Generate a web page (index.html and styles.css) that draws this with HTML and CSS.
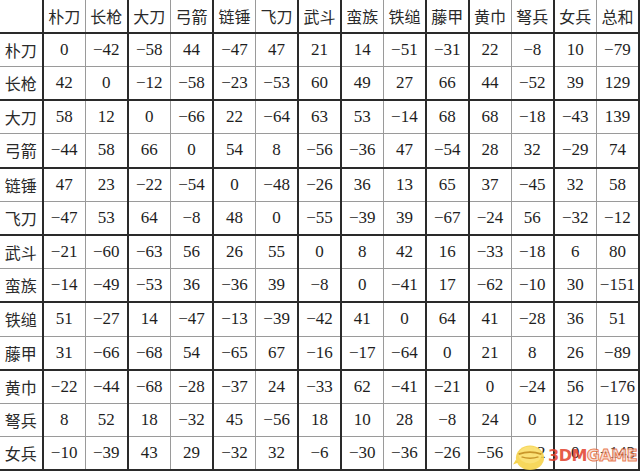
FILE: index.html
```html
<!DOCTYPE html>
<html lang="zh-CN">
<head>
<meta charset="utf-8">
<title>兵种克制表</title>
<link rel="stylesheet" href="styles.css">
</head>
<body>
<div class="wrap">
<table class="grid">
<tr><td></td><td>朴刀</td><td>长枪</td><td>大刀</td><td>弓箭</td><td>链锤</td><td>飞刀</td><td>武斗</td><td>蛮族</td><td>铁缒</td><td>藤甲</td><td>黄巾</td><td>弩兵</td><td>女兵</td><td>总和</td></tr>
<tr><td>朴刀</td><td>0</td><td>−42</td><td>−58</td><td>44</td><td>−47</td><td>47</td><td>21</td><td>14</td><td>−51</td><td>−31</td><td>22</td><td>−8</td><td>10</td><td>−79</td></tr>
<tr><td>长枪</td><td>42</td><td>0</td><td>−12</td><td>−58</td><td>−23</td><td>−53</td><td>60</td><td>49</td><td>27</td><td>66</td><td>44</td><td>−52</td><td>39</td><td>129</td></tr>
<tr><td>大刀</td><td>58</td><td>12</td><td>0</td><td>−66</td><td>22</td><td>−64</td><td>63</td><td>53</td><td>−14</td><td>68</td><td>68</td><td>−18</td><td>−43</td><td>139</td></tr>
<tr><td>弓箭</td><td>−44</td><td>58</td><td>66</td><td>0</td><td>54</td><td>8</td><td>−56</td><td>−36</td><td>47</td><td>−54</td><td>28</td><td>32</td><td>−29</td><td>74</td></tr>
<tr><td>链锤</td><td>47</td><td>23</td><td>−22</td><td>−54</td><td>0</td><td>−48</td><td>−26</td><td>36</td><td>13</td><td>65</td><td>37</td><td>−45</td><td>32</td><td>58</td></tr>
<tr><td>飞刀</td><td>−47</td><td>53</td><td>64</td><td>−8</td><td>48</td><td>0</td><td>−55</td><td>−39</td><td>39</td><td>−67</td><td>−24</td><td>56</td><td>−32</td><td>−12</td></tr>
<tr><td>武斗</td><td>−21</td><td>−60</td><td>−63</td><td>56</td><td>26</td><td>55</td><td>0</td><td>8</td><td>42</td><td>16</td><td>−33</td><td>−18</td><td>6</td><td>80</td></tr>
<tr><td>蛮族</td><td>−14</td><td>−49</td><td>−53</td><td>36</td><td>−36</td><td>39</td><td>−8</td><td>0</td><td>−41</td><td>17</td><td>−62</td><td>−10</td><td>30</td><td>−151</td></tr>
<tr><td>铁缒</td><td>51</td><td>−27</td><td>14</td><td>−47</td><td>−13</td><td>−39</td><td>−42</td><td>41</td><td>0</td><td>64</td><td>41</td><td>−28</td><td>36</td><td>51</td></tr>
<tr><td>藤甲</td><td>31</td><td>−66</td><td>−68</td><td>54</td><td>−65</td><td>67</td><td>−16</td><td>−17</td><td>−64</td><td>0</td><td>21</td><td>8</td><td>26</td><td>−89</td></tr>
<tr><td>黄巾</td><td>−22</td><td>−44</td><td>−68</td><td>−28</td><td>−37</td><td>24</td><td>−33</td><td>62</td><td>−41</td><td>−21</td><td>0</td><td>−24</td><td>56</td><td>−176</td></tr>
<tr><td>弩兵</td><td>8</td><td>52</td><td>18</td><td>−32</td><td>45</td><td>−56</td><td>18</td><td>10</td><td>28</td><td>−8</td><td>24</td><td>0</td><td>12</td><td>119</td></tr>
<tr><td>女兵</td><td>−10</td><td>−39</td><td>43</td><td>29</td><td>−32</td><td>32</td><td>−6</td><td>−30</td><td>−36</td><td>−26</td><td>−56</td><td>−12</td><td>0</td><td>−143</td></tr>
</table>
<div class="mark">
<svg class="chick" width="34" height="32" viewBox="0 0 36 34">
<ellipse cx="18" cy="20" rx="15" ry="13" fill="#f6d34a" opacity="0.9"/>
<ellipse cx="18" cy="17" rx="12" ry="9" fill="#fbe27a" opacity="0.9"/>
<path d="M6 16 Q18 12 30 16" stroke="#c9962a" stroke-width="2" fill="none"/>
<path d="M9 19 Q18 22 27 19" stroke="#c9962a" stroke-width="1.5" fill="none"/>
<path d="M3 22 L0 27 L6 25 Z" fill="#f6d34a"/>
</svg>
<span class="logo"><span class="red">3DM</span><span class="game">GAME</span></span>
</div>
</div>
</body>
</html>
```

FILE: styles.css
```css
html, body {
  margin: 0;
  padding: 0;
  background: #ffffff;
}
.wrap {
  position: relative;
  width: 640px;
  height: 471px;
  overflow: hidden;
}
.grid {
  width: 640px;
  height: 471px;
  border-collapse: collapse;
  table-layout: fixed;
  font-family: "Liberation Serif", "Noto Sans CJK SC", serif;
  font-size: 17px;
  line-height: 18px;
  color: #1e1e1e;
}
.grid td {
  border: 1px solid #9a9a9a;
  text-align: center;
  vertical-align: middle;
  padding: 0;
  white-space: nowrap;
}
.grid tr:first-child td,
.grid td:first-child {
  font-family: "Noto Sans CJK SC", sans-serif;
  font-size: 16px;
  color: #2a2a2a;
}
.grid tr:first-child td { border-top: none; }
.grid td:first-child { border-left: none; }

/* darker grid lines */
.grid td:nth-child(2),
.grid td:nth-child(4),
.grid td:nth-child(6),
.grid td:nth-child(8),
.grid td:nth-child(9),
.grid td:nth-child(11),
.grid td:nth-child(12),
.grid td:nth-child(14) {
  border-left: 2px solid #2a2a2a;
}
.grid td:nth-child(15) { border-right: 2px solid #2a2a2a; }

.grid tr:nth-child(1) td,
.grid tr:nth-child(3) td,
.grid tr:nth-child(5) td,
.grid tr:nth-child(7) td,
.grid tr:nth-child(9) td,
.grid tr:nth-child(11) td,
.grid tr:nth-child(14) td {
  border-bottom: 2px solid #2a2a2a;
}

.mark {
  position: absolute;
  left: 513px;
  top: 439px;
  display: flex;
  align-items: center;
  gap: 1px;
}
.chick { display: block; }
.logo {
  font-family: "DejaVu Sans", sans-serif;
  font-weight: bold;
  font-size: 16px;
  letter-spacing: -0.5px;
  opacity: 0.85;
}
.red { color: #e2402b; }
.game {
  color: #f7d9cf;
  -webkit-text-stroke: 1px #e66a3a;
}
```
